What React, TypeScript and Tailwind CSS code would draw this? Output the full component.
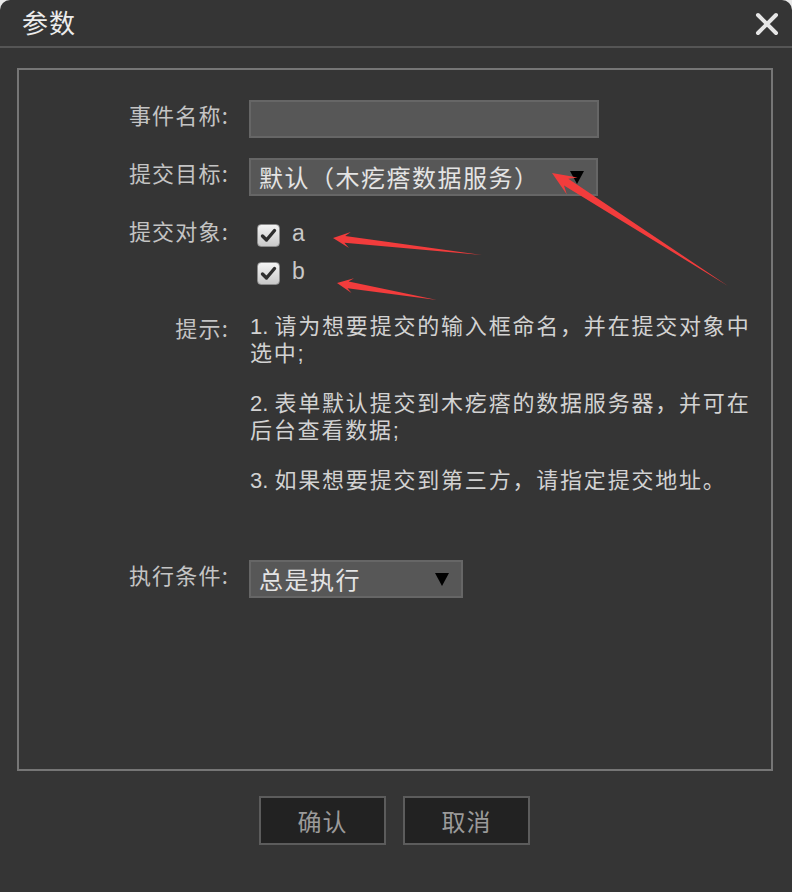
import React from "react";

type Pt = [number, number];

function arrowPoints(t: Pt, p: Pt, headLen: number, headHalf: number, neckHalf: number): string {
  const dx = p[0] - t[0];
  const dy = p[1] - t[1];
  const len = Math.hypot(dx, dy);
  const ux = dx / len;
  const uy = dy / len;
  const nx = -uy;
  const ny = ux;
  const bx = p[0] - ux * headLen;
  const by = p[1] - uy * headLen;
  const kx = p[0] - ux * headLen * 0.7;
  const ky = p[1] - uy * headLen * 0.7;
  const pts: Pt[] = [
    p,
    [bx + nx * headHalf, by + ny * headHalf],
    [kx + nx * neckHalf, ky + ny * neckHalf],
    t,
    [kx - nx * neckHalf, ky - ny * neckHalf],
    [bx - nx * headHalf, by - ny * headHalf],
  ];
  return pts.map((q) => `${q[0].toFixed(1)},${q[1].toFixed(1)}`).join(" ");
}

const CJK = { fontFamily: '"Noto Sans CJK SC", "Liberation Sans", sans-serif' };
const MIX = { fontFamily: '"Liberation Sans", "Noto Sans CJK SC", sans-serif' };

function Triangle() {
  return (
    <svg width="14" height="14" viewBox="0 0 14 14" className="shrink-0">
      <polygon points="0,1 14,1 7,14" fill="#000" />
    </svg>
  );
}

function CheckBox() {
  return (
    <div className="w-[23px] h-[23px] rounded-[4px] border border-[#8c8c8c] bg-gradient-to-b from-[#f4f4f4] to-[#c9c9c9] flex items-center justify-center shrink-0">
      <svg width="17" height="17" viewBox="0 0 17 17">
        <path d="M2.5 9 L6.5 13 L14.5 3.5" fill="none" stroke="#2e2e2e" strokeWidth="3.4" strokeLinecap="round" strokeLinejoin="round" />
      </svg>
    </div>
  );
}

function Label({ children }: { children: React.ReactNode }) {
  return (
    <div className="text-right text-[22px] leading-[28px] tracking-[1.2px] text-[#c4c4c4]" style={CJK}>
      {children}
    </div>
  );
}

export default function App() {
  return (
    <div className="w-[792px] h-[892px] bg-[#e9e9e9] relative overflow-hidden">
      <div className="w-full h-full bg-[#353535] rounded-t-[10px] flex flex-col">
        {/* title bar */}
        <div className="h-[46px] flex items-center justify-between pl-[22px] pr-[13px] shrink-0">
          <div className="text-[26px] leading-[30px] tracking-[1px] text-[#ececec] mt-[-2px]" style={CJK}>
            参数
          </div>
          <svg width="24" height="24" viewBox="0 0 24 24" className="mt-[2px]">
            <path d="M3 3 L21 21 M21 3 L3 21" stroke="#e6e6e6" strokeWidth="4" strokeLinecap="round" />
          </svg>
        </div>
        <div className="h-[2px] bg-[#555555] shrink-0" />

        {/* content box */}
        <div className="mt-[20px] ml-[17px] mr-[19px] h-[703px] border-2 border-[#767676] pt-[30px]">
          <div className="grid grid-cols-[210px_1fr] gap-x-[20px] items-start">
            {/* row 1 */}
            <Label>事件名称:</Label>
            <div className="w-[350px] h-[38px] bg-[#575757] border-2 border-[#666666]" />

            {/* row 2 */}
            <div className="mt-[20px]">
              <Label>提交目标:</Label>
            </div>
            <div className="mt-[20px] w-[349px] h-[38px] bg-[#575757] border-2 border-[#666666] flex items-center justify-between pl-[8px] pr-[12px]">
              <span className="text-[24px] leading-[30px] tracking-[1.5px] text-[#e4e4e4] whitespace-nowrap" style={CJK}>
                默认（木疙瘩数据服务）
              </span>
              <Triangle />
            </div>

            {/* row 3 */}
            <div className="mt-[20px]">
              <Label>提交对象:</Label>
            </div>
            <div className="mt-[20px] flex flex-col pl-[8px]">
              {["a", "b"].map((k) => (
                <div key={k} className="h-[38px] flex items-center gap-[12px]">
                  <CheckBox />
                  <span className="text-[23px] leading-[28px] text-[#c8c8c8] mt-[-4px]" style={MIX}>
                    {k}
                  </span>
                </div>
              ))}
            </div>

            {/* row 4 hints */}
            <div className="mt-[21px]">
              <Label>提示:</Label>
            </div>
            <div className="mt-[21px] w-[512px] ml-[1px] text-[22px] leading-[27px] tracking-[1.8px] text-[#d2d2d2] flex flex-col gap-[23px]" style={MIX}>
              <p>
                <span className="tracking-normal">1. </span>请为想要提交的输入框命名，并在提交对象中选中;
              </p>
              <p>
                <span className="tracking-normal">2. </span>表单默认提交到木疙瘩的数据服务器，并可在后台查看数据;
              </p>
              <p>
                <span className="tracking-normal">3. </span>如果想要提交到第三方，请指定提交地址。
              </p>
            </div>

            {/* row 5 */}
            <div className="mt-[66px]">
              <Label>执行条件:</Label>
            </div>
            <div className="mt-[66px] w-[214px] h-[38px] bg-[#575757] border-2 border-[#666666] flex items-center justify-between pl-[8px] pr-[12px]">
              <span className="text-[24px] leading-[30px] tracking-[1.5px] text-[#e4e4e4] whitespace-nowrap" style={CJK}>
                总是执行
              </span>
              <Triangle />
            </div>
          </div>
        </div>

        {/* buttons */}
        <div className="mt-[25px] flex justify-center gap-[17px] mr-[3px]">
          {["确认", "取消"].map((t) => (
            <button
              key={t}
              className="w-[127px] h-[49px] bg-[#222222] border-2 border-[#5c5c5c] text-[24px] tracking-[1px] text-[#9a9a9a] flex items-center justify-center"
              style={CJK}
            >
              {t}
            </button>
          ))}
        </div>
      </div>

      {/* red annotation arrows */}
      <svg className="absolute inset-0 pointer-events-none" width="792" height="892" viewBox="0 0 792 892">
        <polygon points={arrowPoints([728, 286], [552, 173], 24, 10, 4)} fill="#f23c3c" />
        <polygon points={arrowPoints([482, 255], [333, 238], 17, 8, 3.5)} fill="#f23c3c" />
        <polygon points={arrowPoints([437, 300], [337, 283], 16, 7.5, 3.5)} fill="#f23c3c" />
      </svg>
    </div>
  );
}
